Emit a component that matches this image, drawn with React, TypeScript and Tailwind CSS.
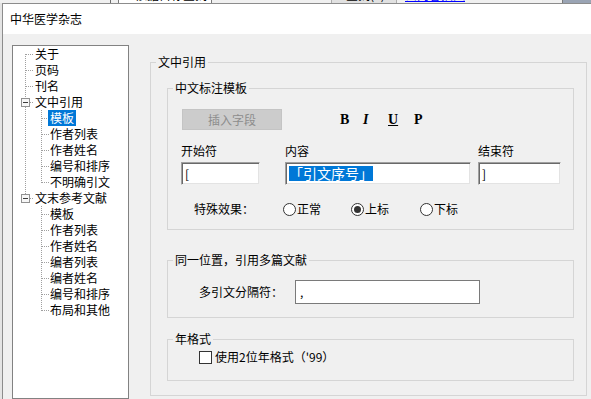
import React from 'react'

const tree = [
  { t: '关于', l: 0 },
  { t: '页码', l: 0 },
  { t: '刊名', l: 0 },
  { t: '文中引用', l: 0, box: true },
  { t: '模板', l: 1, sel: true },
  { t: '作者列表', l: 1 },
  { t: '作者姓名', l: 1 },
  { t: '编号和排序', l: 1 },
  { t: '不明确引文', l: 1 },
  { t: '文末参考文献', l: 0, box: true },
  { t: '模板', l: 1 },
  { t: '作者列表', l: 1 },
  { t: '作者姓名', l: 1 },
  { t: '编者列表', l: 1 },
  { t: '编者姓名', l: 1 },
  { t: '编号和排序', l: 1 },
  { t: '布局和其他', l: 1 },
]

const sunken =
  'bg-white border-t border-l border-b border-r border-t-[#a0a0a0] border-l-[#a0a0a0] border-b-[#f0f0f0] border-r-[#f0f0f0] shadow-[inset_1px_1px_0_#696969,inset_-1px_-1px_0_#e3e3e3]'

function TreeLines() {
  const cy = (i: number) => 8 + i * 16 + 0.5
  return (
    <svg className="absolute left-0 top-0" width="115" height="272" viewBox="0 0 115 272">
      <g stroke="#a0a0a0" strokeDasharray="1 1" fill="none">
        <line x1="12.5" y1="8" x2="12.5" y2="52" />
        <line x1="12.5" y1="61" x2="12.5" y2="148" />
        {[0, 1, 2].map((i) => (
          <line key={i} x1="13" y1={cy(i)} x2="21" y2={cy(i)} />
        ))}
        {[3, 9].map((i) => (
          <line key={i} x1="17" y1={cy(i)} x2="21" y2={cy(i)} />
        ))}
        <line x1="28.5" y1="64" x2="28.5" y2="137" />
        <line x1="28.5" y1="160" x2="28.5" y2="265" />
        {[4, 5, 6, 7, 8, 10, 11, 12, 13, 14, 15, 16].map((i) => (
          <line key={i} x1="29" y1={cy(i)} x2="36" y2={cy(i)} />
        ))}
      </g>
      {[3, 9].map((i) => (
        <g key={i}>
          <rect x="8.5" y={cy(i) - 4} width="8" height="8" fill="#f7f7f7" stroke="#919191" />
          <line x1="10" y1={cy(i)} x2="15" y2={cy(i)} stroke="#3c3c3c" />
        </g>
      ))}
    </svg>
  )
}

function Radio({ label, checked }: { label: string; checked?: boolean }) {
  return (
    <div className="flex items-center">
      <span className="w-[13px] h-[13px] rounded-full border border-[#333333] bg-white flex items-center justify-center">
        {checked && <span className="w-[7px] h-[7px] rounded-full bg-[#333333]" />}
      </span>
      <span className="ml-[1px]">{label}</span>
    </div>
  )
}

export default function App() {
  return (
    <div className="w-[591px] h-[399px] overflow-hidden bg-[#f0f0f0] flex flex-col text-[12px] leading-[16px] text-black font-['Noto_Sans_CJK_SC',sans-serif]">
      {/* window behind the dialog */}
      <div className="h-[3px] shrink-0 flex overflow-hidden bg-[#f0f0f0]">
        <div className="w-[110px]" />
        <div className="w-[1px] bg-[#6d6d6d]" />
        <div className="w-[7px]" />
        <div className="w-[94px] bg-white border-l border-r border-[#7a7a7a] overflow-hidden">
          <div className="-mt-[13px] pl-[16px] whitespace-nowrap">依据目标查找·</div>
        </div>
        <div className="w-[119px]" />
        <div className="w-[66px] bg-[#e1e1e1] border-l border-r border-[#adadad] overflow-hidden">
          <div className="-mt-[13px] pl-[14px] whitespace-nowrap">查找(F)</div>
        </div>
        <div className="w-[8px]" />
        <div className="w-[80px] overflow-hidden">
          <div className="-mt-[13px] whitespace-nowrap text-[#0000ff] underline">去内容插入</div>
        </div>
        <div className="w-[77px]" />
        <div className="flex-1 bg-[#9aa4b4] border-l border-[#7a7a7a]" />
      </div>

      <div className="flex flex-1">
        <div className="w-[2px] bg-[#e4e4e4]" />
        <div className="flex-1 flex flex-col border-l border-t border-[#8c8c8c]">
          <div className="h-[30px] shrink-0 bg-white flex items-center pl-[7px]">中华医学杂志</div>

          <div className="flex-1 flex pt-[11px]">
            {/* tree */}
            <div className="ml-[9px] w-[117px] border border-[#828282] bg-white">
              <div className="relative">
                <TreeLines />
                {tree.map((r, i) => (
                  <div key={i} className={`h-[16px] relative ${r.l ? 'pl-[35px]' : 'pl-[20px]'}`}>
                    <span className={`px-[2px] inline-block h-[16px] ${r.sel ? 'bg-[#0078d7] text-white' : ''}`}>{r.t}</span>
                  </div>
                ))}
              </div>
            </div>

            {/* settings */}
            <fieldset className="ml-[21px] mt-[9px] w-[437px] h-[342px] border border-[#d5d5d5] min-w-0">
              <legend className="ml-[5px] px-[2px]">文中引用</legend>
              <div className="pl-[16px]">
                <fieldset className="mt-[10px] w-[407px] border border-[#d5d5d5]">
                  <legend className="ml-[5px] px-[2px]">中文标注模板</legend>
                  <div className="pl-[13px] pb-[12px]">
                    <div className="mt-[13px] flex items-center">
                      <div className="ml-[1px] w-[100px] h-[21px] bg-[#cccccc] border border-[#c4c4c4] text-[#8d8d8d] flex items-center justify-center">
                        插入字段
                      </div>
                      <div className="ml-[58px] flex items-center text-[14px] font-['Liberation_Serif',serif] font-bold">
                        <span className="w-[23px]">B</span>
                        <span className="w-[25px] italic">I</span>
                        <span className="w-[26px] underline">U</span>
                        <span>P</span>
                      </div>
                    </div>

                    <div className="mt-[13px] flex">
                      <div className="w-[79px]">开始符</div>
                      <div className="ml-[25px] w-[186px]">内容</div>
                      <div className="ml-[7px] w-[83px]">结束符</div>
                    </div>
                    <div className="mt-[3px] flex">
                      <div className={`w-[79px] h-[23px] ${sunken} flex items-center pl-[3px]`}>[</div>
                      <div className={`ml-[25px] w-[186px] h-[23px] ${sunken} flex items-center pl-[3px]`}>
                        <span className="bg-[#0078d7] text-white text-[14px] leading-[15px]">「引文序号」</span>
                      </div>
                      <div className={`ml-[7px] w-[83px] h-[23px] ${sunken} flex items-center pl-[3px]`}>]</div>
                    </div>

                    <div className="mt-[16px] flex items-center">
                      <span className="ml-[13px]">特殊效果：</span>
                      <div className="ml-[29px]">
                        <Radio label="正常" />
                      </div>
                      <div className="ml-[30px]">
                        <Radio label="上标" checked />
                      </div>
                      <div className="ml-[31px]">
                        <Radio label="下标" />
                      </div>
                    </div>
                  </div>
                </fieldset>

                <fieldset className="mt-[22px] w-[407px] border border-[#d5d5d5]">
                  <legend className="ml-[5px] px-[2px]">同一位置，引用多篇文献</legend>
                  <div className="pl-[31px] pb-[13px] mt-[12px] flex items-center">
                    <span>多引文分隔符：</span>
                    <div className="ml-[12px] w-[185px] h-[24px] bg-white border border-[#7a7a7a] flex items-center pl-[4px]">,</div>
                  </div>
                </fieldset>

                <fieldset className="mt-[13px] w-[407px] border border-[#d5d5d5]">
                  <legend className="ml-[5px] px-[2px]">年格式</legend>
                  <div className="pl-[31px] pb-[15px] mt-[2px] flex items-center">
                    <span className="w-[13px] h-[13px] border border-[#333333] bg-white" />
                    <span className="ml-[3px]">使用2位年格式（'99）</span>
                  </div>
                </fieldset>
              </div>
            </fieldset>
          </div>
        </div>
      </div>
    </div>
  )
}
